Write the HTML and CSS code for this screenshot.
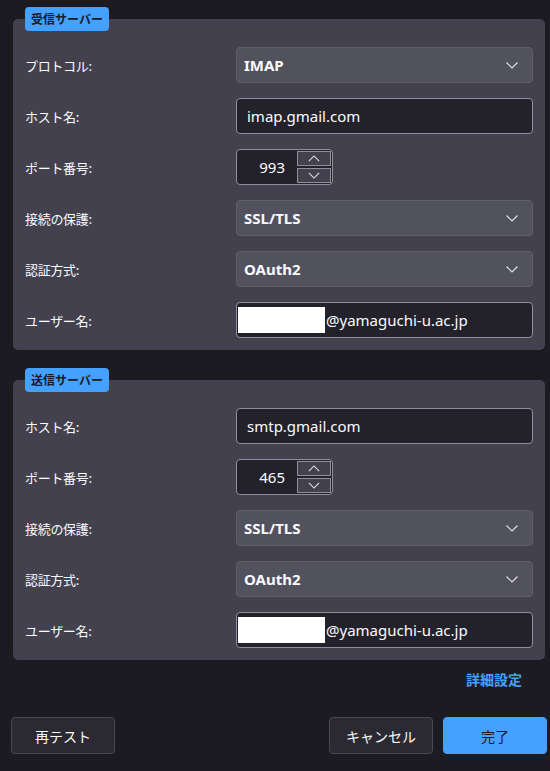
FILE: index.html
```html
<!DOCTYPE html>
<html>
<head>
    <title>アカウント設定</title>
    <link rel="stylesheet" href="styles.css">
</head>
<body>
    <div class="server">
        <span class="badge">受信サーバー</span>
        <div class="panel">
            <label class="label">プロトコル:</label>
            <div class="select">IMAP<svg class="chevron" viewBox="0 0 12 7"><path d="M0.5 0.5 L6 6 L11.5 0.5"/></svg></div>

            <label class="label">ホスト名:</label>
            <div class="input">imap.gmail.com</div>

            <label class="label">ポート番号:</label>
            <div class="port">
                <span class="port-value">993</span>
                <span class="spin">
                    <span class="spin-btn"><svg viewBox="0 0 14 8"><path d="M1 7 L7 1 L13 7"/></svg></span>
                    <span class="spin-btn"><svg viewBox="0 0 14 8"><path d="M1 1 L7 7 L13 1"/></svg></span>
                </span>
            </div>

            <label class="label">接続の保護:</label>
            <div class="select">SSL/TLS<svg class="chevron" viewBox="0 0 12 7"><path d="M0.5 0.5 L6 6 L11.5 0.5"/></svg></div>

            <label class="label">認証方式:</label>
            <div class="select">OAuth2<svg class="chevron" viewBox="0 0 12 7"><path d="M0.5 0.5 L6 6 L11.5 0.5"/></svg></div>

            <label class="label">ユーザー名:</label>
            <div class="input user"><span class="mask"></span>@yamaguchi-u.ac.jp</div>
        </div>
    </div>

    <div class="server">
        <span class="badge">送信サーバー</span>
        <div class="panel">
            <label class="label">ホスト名:</label>
            <div class="input">smtp.gmail.com</div>

            <label class="label">ポート番号:</label>
            <div class="port">
                <span class="port-value">465</span>
                <span class="spin">
                    <span class="spin-btn"><svg viewBox="0 0 14 8"><path d="M1 7 L7 1 L13 7"/></svg></span>
                    <span class="spin-btn"><svg viewBox="0 0 14 8"><path d="M1 1 L7 7 L13 1"/></svg></span>
                </span>
            </div>

            <label class="label">接続の保護:</label>
            <div class="select">SSL/TLS<svg class="chevron" viewBox="0 0 12 7"><path d="M0.5 0.5 L6 6 L11.5 0.5"/></svg></div>

            <label class="label">認証方式:</label>
            <div class="select">OAuth2<svg class="chevron" viewBox="0 0 12 7"><path d="M0.5 0.5 L6 6 L11.5 0.5"/></svg></div>

            <label class="label">ユーザー名:</label>
            <div class="input user"><span class="mask"></span>@yamaguchi-u.ac.jp</div>
        </div>
    </div>

    <div class="advanced"><a class="link">詳細設定</a></div>

    <div class="actions">
        <button class="button">再テスト</button>
        <span class="spacer"></span>
        <button class="button">キャンセル</button>
        <button class="button primary">完了</button>
    </div>
</body>
</html>
```

FILE: styles.css
```css
body {
    font-family: "Noto Sans", "Noto Sans CJK JP", sans-serif;
    background-color: #1c1b22;
    color: #fbfbfe;
    margin: 0;
    padding: 19px 5px 0 13px;
    width: 532px;
}

.server {
    position: relative;
    margin-bottom: 30px;
}

.badge {
    position: absolute;
    left: 12px;
    top: -12px;
    height: 24px;
    line-height: 24px;
    padding: 0 6px;
    background-color: #45a1ff;
    color: #1c1b22;
    font-family: "Noto Sans CJK JP", sans-serif;
    font-size: 12px;
    font-weight: bold;
    border-radius: 4px;
}

.panel {
    background-color: #42414d;
    border-radius: 5px;
    padding: 28px 12px 12px 12px;
    display: grid;
    grid-template-columns: 211px 1fr;
    grid-auto-rows: 36px;
    row-gap: 15px;
    align-items: center;
}

.label {
    font-family: "Noto Sans CJK JP", sans-serif;
    font-size: 13px;
    letter-spacing: -0.3px;
}

.select {
    height: 36px;
    box-sizing: border-box;
    background-color: #52515e;
    border: 1px solid #5f5e6a;
    border-radius: 4px;
    display: flex;
    align-items: center;
    justify-content: space-between;
    padding: 0 14px 0 7px;
    font-size: 15px;
    font-weight: bold;
}

.chevron {
    width: 12px;
    height: 7px;
    fill: none;
    stroke: #e0e0e6;
    stroke-width: 1.2;
}

.input {
    height: 36px;
    box-sizing: border-box;
    background-color: #23222b;
    border: 1px solid #8f8f9d;
    border-radius: 4px;
    display: flex;
    align-items: center;
    padding: 0 10px;
    font-size: 15px;
}

.input.user {
    padding: 0 1px;
}

.mask {
    width: 87px;
    height: 26px;
    background-color: #fff;
    margin-right: 1px;
}

.port {
    width: 97px;
    height: 36px;
    box-sizing: border-box;
    background-color: #23222b;
    border: 1px solid #8f8f9d;
    border-radius: 4px;
    display: flex;
    align-items: center;
    justify-content: space-between;
    padding: 0 1px 0 0;
    font-size: 15px;
}

.port-value {
    flex: 1;
    text-align: right;
    padding-right: 12px;
}

.spin {
    display: flex;
    flex-direction: column;
    gap: 2px;
    width: 34px;
}

.spin-btn {
    height: 15px;
    box-sizing: border-box;
    border: 1px solid #8f8f9d;
    background-color: #42414d;
    display: flex;
    align-items: center;
    justify-content: center;
}

.spin-btn svg {
    width: 12px;
    height: 7px;
    fill: none;
    stroke: #e0e0e6;
    stroke-width: 1.3;
}

.advanced {
    display: flex;
    justify-content: flex-end;
    margin-top: -21px;
    padding-right: 23px;
}

.link {
    color: #45a1ff;
    font-family: "Noto Sans CJK JP", sans-serif;
    font-size: 14px;
    font-weight: bold;
    line-height: 20px;
}

.actions {
    display: flex;
    gap: 10px;
    margin: 28px -2px 0 -2px;
}

.spacer {
    flex: 1;
}

.button {
    width: 104px;
    height: 37px;
    background-color: #2b2a33;
    color: #fbfbfe;
    border: 1px solid #4a4953;
    border-radius: 4px;
    font-family: "Noto Sans CJK JP", sans-serif;
    font-size: 14px;
}

.button.primary {
    background-color: #45a1ff;
    border-color: #45a1ff;
    color: #1c1b22;
}
```
